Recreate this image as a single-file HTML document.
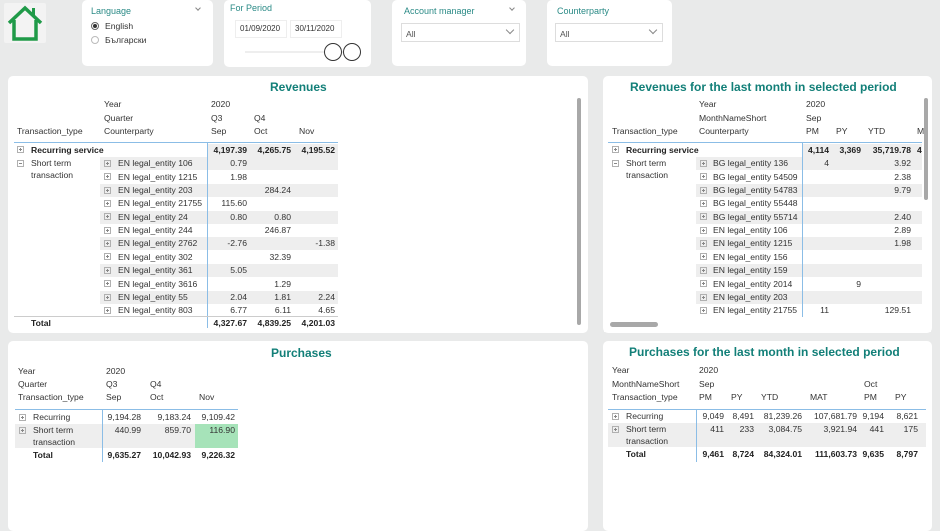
<!DOCTYPE html>
<html><head><meta charset="utf-8">
<style>
*{margin:0;padding:0;box-sizing:border-box}
body{width:940px;height:522px;background:#e9eaea;font-family:"Liberation Sans","Noto Sans CJK JP",sans-serif;font-size:8.6px;color:#333;position:relative;overflow:hidden}
.c{position:absolute;background:#fff;border-radius:5px}
.a{position:absolute;white-space:nowrap;line-height:12px}
.v{position:absolute;width:70px;text-align:right;line-height:12px;white-space:nowrap}
.b{font-weight:bold;color:#222}
.g{position:absolute;background:#eeeeee}
.h{position:absolute;font-weight:bold;color:#127f78;font-size:12px;white-space:nowrap}
.ln{position:absolute;background:#8bbde6}
.pb{position:absolute;width:7px;height:7px;border:1px solid #b0b0b0}
.pb:before{content:"";position:absolute;left:1px;top:2px;width:3px;height:1px;background:#888}
.pb:after{content:"";position:absolute;left:2px;top:1px;width:1px;height:3px;background:#888}
.mn:after{display:none}
.tl{position:absolute;color:#2a8a86;font-size:9px}
.dd{position:absolute;border:1px solid #ddd;background:#fff}
.chev{position:absolute;width:6px;height:6px;border-right:1px solid #888;border-bottom:1px solid #888;transform:rotate(45deg)}
</style></head><body>

<!-- home -->
<div class="c" style="left:4px;top:3px;width:42px;height:40px;border-radius:2px;background:#f3f3f3"></div>
<svg style="position:absolute;left:5px;top:3px" width="40" height="40" viewBox="0 0 40 40"><path d="M4 20 L20 5 L36 20 M9 17 V36 H31 V17" fill="none" stroke="#1f9a48" stroke-width="3.5"/><rect x="27" y="5" width="3" height="8" fill="#1f9a48"/></svg>

<!-- Language -->
<div class="c" style="left:82px;top:0;width:131px;height:66px"></div>
<div class="tl" style="left:91px;top:6px">Language</div>
<div class="chev" style="left:196px;top:6px;width:4px;height:4px"></div>
<div style="position:absolute;left:91px;top:22px;width:8px;height:8px;border-radius:50%;border:1px solid #666;background:#fff"><div style="position:absolute;left:1px;top:1px;width:4px;height:4px;border-radius:50%;background:#333"></div></div>
<div class="a" style="left:105px;top:20px">English</div>
<div style="position:absolute;left:91px;top:36px;width:8px;height:8px;border-radius:50%;border:1px solid #bbb"></div>
<div class="a" style="left:105px;top:34px">Български</div>

<!-- Period -->
<div class="c" style="left:224px;top:0;width:147px;height:67px"></div>
<div class="tl" style="left:230px;top:3px">For Period</div>
<div class="dd" style="left:235px;top:20px;width:52px;height:18px;border-color:#eee"></div>
<div class="a" style="left:240px;top:23px;font-size:8px">01/09/2020</div>
<div class="dd" style="left:290px;top:20px;width:52px;height:18px;border-color:#eee"></div>
<div class="a" style="left:295px;top:23px;font-size:8px">30/11/2020</div>
<div style="position:absolute;left:245px;top:51px;width:100px;height:2px;background:#eee"></div>
<div style="position:absolute;left:324px;top:43px;width:18px;height:18px;border:1.5px solid #333;border-radius:50%;background:#fff"></div>
<div style="position:absolute;left:343px;top:43px;width:18px;height:18px;border:1.5px solid #333;border-radius:50%;background:#fff"></div>

<!-- Account manager -->
<div class="c" style="left:392px;top:0;width:134px;height:66px"></div>
<div class="tl" style="left:404px;top:6px">Account manager</div>
<div class="chev" style="left:510px;top:6px;width:4px;height:4px"></div>
<div class="dd" style="left:401px;top:23px;width:119px;height:19px"></div>
<div class="a" style="left:406px;top:28px;color:#555">All</div>
<div class="chev" style="left:507px;top:27px"></div>

<!-- Counterparty -->
<div class="c" style="left:547px;top:0;width:125px;height:66px"></div>
<div class="tl" style="left:557px;top:6px">Counterparty</div>
<div class="dd" style="left:555px;top:23px;width:108px;height:19px"></div>
<div class="a" style="left:560px;top:28px;color:#555">All</div>
<div class="chev" style="left:650px;top:27px"></div>

<!-- Revenues card -->
<div class="c" style="left:8px;top:76px;width:580px;height:257px"></div>
<div class="h" style="left:270px;top:80px">Revenues</div>
<div class="a" style="left:104px;top:98px">Year</div><div class="a" style="left:211px;top:98px">2020</div>
<div class="a" style="left:104px;top:112px">Quarter</div><div class="a" style="left:211px;top:112px">Q3</div><div class="a" style="left:254px;top:112px">Q4</div>
<div class="a" style="left:17px;top:125px">Transaction_type</div><div class="a" style="left:104px;top:125px">Counterparty</div><div class="a" style="left:211px;top:125px">Sep</div><div class="a" style="left:254px;top:125px">Oct</div><div class="a" style="left:299px;top:125px">Nov</div>
<div class="ln" style="left:14px;top:142px;width:324px;height:1px"></div>
<div class="g" style="left:207px;top:144px;width:131px;height:13px"></div>
<div class="g" style="left:100px;top:157px;width:238px;height:13px"></div>
<div class="g" style="left:100px;top:184px;width:238px;height:13px"></div>
<div class="g" style="left:100px;top:211px;width:238px;height:13px"></div>
<div class="g" style="left:100px;top:237px;width:238px;height:13px"></div>
<div class="g" style="left:100px;top:264px;width:238px;height:13px"></div>
<div class="g" style="left:100px;top:291px;width:238px;height:13px"></div>
<div class="ln" style="left:207px;top:143px;width:1px;height:185px"></div>
<div class="pb" style="left:17px;top:146px"></div><div class="a b" style="left:31px;top:144px">Recurring service</div>
<div class="v b" style="left:177px;top:144px">4,197.39</div><div class="v b" style="left:221px;top:144px">4,265.75</div><div class="v b" style="left:265px;top:144px">4,195.52</div>
<div class="pb mn" style="left:17px;top:160px"></div><div class="a" style="left:31px;top:157px">Short term<br>transaction</div>

<div class="pb" style="left:104px;top:160px"></div><div class="a" style="left:118px;top:157px">EN legal_entity 106</div><div class="v" style="left:177px;top:157px">0.79</div>
<div class="pb" style="left:104px;top:173px"></div><div class="a" style="left:118px;top:171px">EN legal_entity 1215</div><div class="v" style="left:177px;top:171px">1.98</div>
<div class="pb" style="left:104px;top:187px"></div><div class="a" style="left:118px;top:184px">EN legal_entity 203</div><div class="v" style="left:221px;top:184px">284.24</div>
<div class="pb" style="left:104px;top:200px"></div><div class="a" style="left:118px;top:197px">EN legal_entity 21755</div><div class="v" style="left:177px;top:197px">115.60</div>
<div class="pb" style="left:104px;top:213px"></div><div class="a" style="left:118px;top:211px">EN legal_entity 24</div><div class="v" style="left:177px;top:211px">0.80</div><div class="v" style="left:221px;top:211px">0.80</div>
<div class="pb" style="left:104px;top:227px"></div><div class="a" style="left:118px;top:224px">EN legal_entity 244</div><div class="v" style="left:221px;top:224px">246.87</div>
<div class="pb" style="left:104px;top:240px"></div><div class="a" style="left:118px;top:237px">EN legal_entity 2762</div><div class="v" style="left:177px;top:237px">-2.76</div><div class="v" style="left:265px;top:237px">-1.38</div>
<div class="pb" style="left:104px;top:253px"></div><div class="a" style="left:118px;top:251px">EN legal_entity 302</div><div class="v" style="left:221px;top:251px">32.39</div>
<div class="pb" style="left:104px;top:267px"></div><div class="a" style="left:118px;top:264px">EN legal_entity 361</div><div class="v" style="left:177px;top:264px">5.05</div>
<div class="pb" style="left:104px;top:280px"></div><div class="a" style="left:118px;top:278px">EN legal_entity 3616</div><div class="v" style="left:221px;top:278px">1.29</div>
<div class="pb" style="left:104px;top:294px"></div><div class="a" style="left:118px;top:291px">EN legal_entity 55</div><div class="v" style="left:177px;top:291px">2.04</div><div class="v" style="left:221px;top:291px">1.81</div><div class="v" style="left:265px;top:291px">2.24</div>
<div class="pb" style="left:104px;top:307px"></div><div class="a" style="left:118px;top:304px">EN legal_entity 803</div><div class="v" style="left:177px;top:304px">6.77</div><div class="v" style="left:221px;top:304px">6.11</div><div class="v" style="left:265px;top:304px">4.65</div>
<div style="position:absolute;left:14px;top:316px;width:324px;height:1px;background:#ccc"></div>
<div class="a b" style="left:31px;top:317px">Total</div>
<div class="v b" style="left:177px;top:317px">4,327.67</div><div class="v b" style="left:221px;top:317px">4,839.25</div><div class="v b" style="left:265px;top:317px">4,201.03</div>
<div style="position:absolute;left:577px;top:98px;width:4px;height:227px;background:#a8a8a8;border-radius:2px"></div>

<!-- Revenues last month -->
<div class="c" style="left:603px;top:76px;width:329px;height:257px"></div>
<div class="h" style="left:630px;top:80px">Revenues for the last month in selected period</div>
<div class="a" style="left:699px;top:98px">Year</div><div class="a" style="left:806px;top:98px">2020</div>
<div class="a" style="left:699px;top:112px">MonthNameShort</div><div class="a" style="left:806px;top:112px">Sep</div>
<div class="a" style="left:612px;top:125px">Transaction_type</div><div class="a" style="left:699px;top:125px">Counterparty</div><div class="a" style="left:806px;top:125px">PM</div><div class="a" style="left:836px;top:125px">PY</div><div class="a" style="left:868px;top:125px">YTD</div><div class="a" style="left:917px;top:125px">M</div>
<div class="ln" style="left:608px;top:142px;width:314px;height:1px"></div>
<div class="g" style="left:802px;top:144px;width:120px;height:13px"></div>
<div class="g" style="left:696px;top:157px;width:226px;height:13px"></div>
<div class="g" style="left:696px;top:184px;width:226px;height:13px"></div>
<div class="g" style="left:696px;top:211px;width:226px;height:13px"></div>
<div class="g" style="left:696px;top:237px;width:226px;height:13px"></div>
<div class="g" style="left:696px;top:264px;width:226px;height:13px"></div>
<div class="g" style="left:696px;top:291px;width:226px;height:13px"></div>
<div class="ln" style="left:802px;top:143px;width:1px;height:178px"></div>
<div class="pb" style="left:612px;top:146px"></div><div class="a b" style="left:626px;top:144px">Recurring service</div>
<div class="v b" style="left:759px;top:144px">4,114</div><div class="v b" style="left:791px;top:144px">3,369</div><div class="v b" style="left:841px;top:144px">35,719.78</div><div class="a b" style="left:917px;top:144px">4</div>
<div class="pb mn" style="left:612px;top:160px"></div><div class="a" style="left:626px;top:157px">Short term<br>transaction</div>
<div class="pb" style="left:700px;top:160px"></div><div class="a" style="left:713px;top:157px">BG legal_entity 136</div><div class="v" style="left:759px;top:157px">4</div><div class="v" style="left:841px;top:157px">3.92</div>
<div class="pb" style="left:700px;top:173px"></div><div class="a" style="left:713px;top:171px">BG legal_entity 54509</div><div class="v" style="left:841px;top:171px">2.38</div>
<div class="pb" style="left:700px;top:187px"></div><div class="a" style="left:713px;top:184px">BG legal_entity 54783</div><div class="v" style="left:841px;top:184px">9.79</div>
<div class="pb" style="left:700px;top:200px"></div><div class="a" style="left:713px;top:197px">BG legal_entity 55448</div>
<div class="pb" style="left:700px;top:213px"></div><div class="a" style="left:713px;top:211px">BG legal_entity 55714</div><div class="v" style="left:841px;top:211px">2.40</div>
<div class="pb" style="left:700px;top:227px"></div><div class="a" style="left:713px;top:224px">EN legal_entity 106</div><div class="v" style="left:841px;top:224px">2.89</div>
<div class="pb" style="left:700px;top:240px"></div><div class="a" style="left:713px;top:237px">EN legal_entity 1215</div><div class="v" style="left:841px;top:237px">1.98</div>
<div class="pb" style="left:700px;top:253px"></div><div class="a" style="left:713px;top:251px">EN legal_entity 156</div>
<div class="pb" style="left:700px;top:267px"></div><div class="a" style="left:713px;top:264px">EN legal_entity 159</div>
<div class="pb" style="left:700px;top:280px"></div><div class="a" style="left:713px;top:278px">EN legal_entity 2014</div><div class="v" style="left:791px;top:278px">9</div>
<div class="pb" style="left:700px;top:294px"></div><div class="a" style="left:713px;top:291px">EN legal_entity 203</div>
<div class="pb" style="left:700px;top:307px"></div><div class="a" style="left:713px;top:304px">EN legal_entity 21755</div><div class="v" style="left:759px;top:304px">11</div><div class="v" style="left:841px;top:304px">129.51</div>
<div style="position:absolute;left:604px;top:317px;width:327px;height:15px;background:#fff"></div>
<div style="position:absolute;left:610px;top:322px;width:48px;height:5px;background:#a8a8a8;border-radius:3px"></div>
<div style="position:absolute;left:924px;top:98px;width:4px;height:102px;background:#a8a8a8;border-radius:2px"></div>

<!-- Purchases -->
<div class="c" style="left:8px;top:341px;width:580px;height:190px"></div>
<div class="h" style="left:271px;top:346px">Purchases</div>
<div class="a" style="left:18px;top:365px">Year</div><div class="a" style="left:106px;top:365px">2020</div>
<div class="a" style="left:18px;top:378px">Quarter</div><div class="a" style="left:106px;top:378px">Q3</div><div class="a" style="left:150px;top:378px">Q4</div>
<div class="a" style="left:18px;top:391px">Transaction_type</div><div class="a" style="left:106px;top:391px">Sep</div><div class="a" style="left:150px;top:391px">Oct</div><div class="a" style="left:199px;top:391px">Nov</div>
<div class="ln" style="left:15px;top:409px;width:223px;height:1px"></div>
<div class="g" style="left:15px;top:424px;width:223px;height:24px"></div>
<div style="position:absolute;left:195px;top:424px;width:43px;height:24px;background:#a6e3b9"></div>
<div class="ln" style="left:102px;top:410px;width:1px;height:52px"></div>
<div class="pb" style="left:19px;top:414px"></div><div class="a" style="left:33px;top:411px">Recurring</div>
<div class="v" style="left:71px;top:411px">9,194.28</div><div class="v" style="left:121px;top:411px">9,183.24</div><div class="v" style="left:165px;top:411px">9,109.42</div>
<div class="pb" style="left:19px;top:427px"></div><div class="a" style="left:33px;top:424px">Short term<br>transaction</div>
<div class="v" style="left:71px;top:424px">440.99</div><div class="v" style="left:121px;top:424px">859.70</div><div class="v" style="left:165px;top:424px">116.90</div>
<div class="a b" style="left:33px;top:449px">Total</div>
<div class="v b" style="left:71px;top:449px">9,635.27</div><div class="v b" style="left:121px;top:449px">10,042.93</div><div class="v b" style="left:165px;top:449px">9,226.32</div>

<!-- Purchases last month -->
<div class="c" style="left:603px;top:341px;width:329px;height:190px"></div>
<div class="h" style="left:629px;top:345px">Purchases for the last month in selected period</div>
<div class="a" style="left:612px;top:364px">Year</div><div class="a" style="left:699px;top:364px">2020</div>
<div class="a" style="left:612px;top:378px">MonthNameShort</div><div class="a" style="left:699px;top:378px">Sep</div><div class="a" style="left:864px;top:378px">Oct</div>
<div class="a" style="left:612px;top:391px">Transaction_type</div><div class="a" style="left:699px;top:391px">PM</div><div class="a" style="left:731px;top:391px">PY</div><div class="a" style="left:761px;top:391px">YTD</div><div class="a" style="left:810px;top:391px">MAT</div><div class="a" style="left:864px;top:391px">PM</div><div class="a" style="left:895px;top:391px">PY</div>
<div class="ln" style="left:608px;top:409px;width:318px;height:1px"></div>
<div class="g" style="left:608px;top:423px;width:318px;height:24px"></div>
<div class="ln" style="left:696px;top:410px;width:1px;height:52px"></div>
<div class="pb" style="left:612px;top:413px"></div><div class="a" style="left:626px;top:410px">Recurring</div>
<div class="v" style="left:654px;top:410px">9,049</div><div class="v" style="left:684px;top:410px">8,491</div><div class="v" style="left:732px;top:410px">81,239.26</div><div class="v" style="left:787px;top:410px">107,681.79</div><div class="v" style="left:814px;top:410px">9,194</div><div class="v" style="left:848px;top:410px">8,621</div>
<div class="pb" style="left:612px;top:426px"></div><div class="a" style="left:626px;top:423px">Short term<br>transaction</div>
<div class="v" style="left:654px;top:423px">411</div><div class="v" style="left:684px;top:423px">233</div><div class="v" style="left:732px;top:423px">3,084.75</div><div class="v" style="left:787px;top:423px">3,921.94</div><div class="v" style="left:814px;top:423px">441</div><div class="v" style="left:848px;top:423px">175</div>
<div class="a b" style="left:626px;top:448px">Total</div>
<div class="v b" style="left:654px;top:448px">9,461</div><div class="v b" style="left:684px;top:448px">8,724</div><div class="v b" style="left:732px;top:448px">84,324.01</div><div class="v b" style="left:787px;top:448px">111,603.73</div><div class="v b" style="left:814px;top:448px">9,635</div><div class="v b" style="left:848px;top:448px">8,797</div>

</body></html>
